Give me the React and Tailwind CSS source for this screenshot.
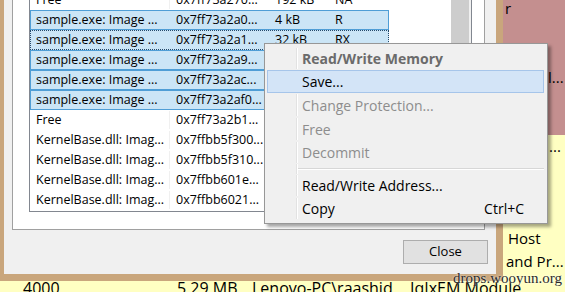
import React from "react";

const rows = [
  { c1: "Free", c2: "0x7ff73a270...", c3: "192 kB", c4: "NA" },
  { c1: "sample.exe: Image ...", c2: "0x7ff73a2a0...", c3: "4 kB", c4: "R", sel: true },
  { c1: "sample.exe: Image ...", c2: "0x7ff73a2a1...", c3: "32 kB", c4: "RX", sel: true, focus: true },
  { c1: "sample.exe: Image ...", c2: "0x7ff73a2a9...", c3: "12 kB", c4: "R", sel: true },
  { c1: "sample.exe: Image ...", c2: "0x7ff73a2ac...", c3: "4 kB", c4: "RW", sel: true },
  { c1: "sample.exe: Image ...", c2: "0x7ff73a2af0...", c3: "8 kB", c4: "R", sel: true },
  { c1: "Free", c2: "0x7ff73a2b1...", c3: "1.02 GB", c4: "NA" },
  { c1: "KernelBase.dll: Imag...", c2: "0x7ffbb5f300...", c3: "4 kB", c4: "R" },
  { c1: "KernelBase.dll: Imag...", c2: "0x7ffbb5f310...", c3: "1.1 MB", c4: "RX" },
  { c1: "KernelBase.dll: Imag...", c2: "0x7ffbb601e...", c3: "8 kB", c4: "RW" },
  { c1: "KernelBase.dll: Imag...", c2: "0x7ffbb6021...", c3: "36 kB", c4: "R" },
];

function Row({ r }) {
  const base = "flex h-[20px] w-[359px] items-center border whitespace-nowrap";
  let cls;
  if (r.focus) cls = "border-dotted border-[#24496b] bg-[#cbe5f6]";
  else if (r.sel) cls = "border-[#4f9ed6] bg-[#cbe5f6]";
  else cls = "border-transparent";
  return (
    <div className={`${base} ${cls}`}>
      <div className={`w-[139px] h-full flex items-center pl-[5px] overflow-hidden ${r.sel ? "" : "border-r border-[#f0f0f0]"}`}>{r.c1}</div>
      <div className="w-[99px] h-full flex items-center pl-[6px] overflow-hidden">{r.c2}</div>
      <div className="w-[60px] h-full flex items-center pl-[6px] overflow-hidden">{r.c3}</div>
      <div className="w-[59px] h-full flex items-center pl-[6px] overflow-hidden">{r.c4}</div>
    </div>
  );
}

function MenuItem({ label, shortcut, bold, disabled, hot, h }) {
  return (
    <div
      className={`flex items-center border ${h} ${hot ? "border-[#a6c5ea] bg-[#d3e4f7]" : "border-transparent"}`}
    >
      <div className={`w-[29px] h-full shrink-0 border-r ${hot ? "border-transparent" : "border-[#e2e2e2]"}`} />
      <div className={`w-[1px] h-full shrink-0 ${hot ? "" : "bg-white"}`} />
      <div
        className={`flex-1 pl-[4px] ${bold ? "font-bold text-[#6b6b6b]" : disabled ? "text-[#8d8d8d]" : "text-black"}`}
      >
        {label}
      </div>
      {shortcut && <div className="pr-[19px] text-black">{shortcut}</div>}
    </div>
  );
}

export default function App() {
  const bgRows = [
    { bg: "bg-[#c48f8f]", text: "r", ml: "ml-[2px]" },
    { bg: "bg-[#c48f8f]", text: "", ml: "" },
    { bg: "bg-[#c48f8f]", text: "", ml: "" },
    { bg: "bg-[#c48f8f]", text: "l...", ml: "ml-[45px]" },
    { bg: "bg-[#c48f8f]", text: "", ml: "" },
    { bg: "bg-[#c48f8f]", text: "", ml: "" },
    { bg: "bg-[#ffffc2]", text: "...", ml: "ml-[46px]" },
    { bg: "bg-[#ffffc2]", text: "", ml: "" },
    { bg: "bg-[#ffffc2]", text: "", ml: "" },
    { bg: "bg-[#ffffc2]", text: "", ml: "" },
    { bg: "bg-[#ffffc2]", text: "Host", ml: "ml-[5px]" },
    { bg: "bg-[#ffffc2]", text: "and Pr...", ml: "ml-[3px]" },
  ];
  return (
    <div className="relative w-[565px] h-[292px] overflow-hidden bg-[#ffffc2] font-['Open_Sans',sans-serif] text-black">
      {/* background process list */}
      <div className="flex flex-col mt-[-3px] text-[15px]">
        {bgRows.map((r, i) => (
          <div key={i} className={`flex h-[23px] items-center ${r.bg}`}>
            <div className="w-[503px] shrink-0" />
            <div className={`whitespace-nowrap ${r.ml}`}>{r.text}</div>
          </div>
        ))}
        <div className="flex h-[30px] items-center whitespace-nowrap text-[16px]">
          <div className="w-[23px] shrink-0" />
          <div className="w-[154px] shrink-0">4000</div>
          <div className="w-[75px] shrink-0">5.29 MB</div>
          <div className="w-[158px] shrink-0">Lenovo-PC\raashid</div>
          <div>IqIxEM Module</div>
        </div>
      </div>

      {/* dialog window */}
      <div className="absolute left-0 top-0 w-[503px] h-[281px] border-l-[4px] border-r-[7px] border-b-[7px] border-[#c9a67c] bg-[#f0f0f0] flex flex-col text-[12.5px]">
        <div className="ml-[8px] w-[473px] h-[230px] bg-white border-l border-r border-b border-[#a0a0a0] pl-[16px] pt-0">
          <div className="relative w-[443px] h-[212px] border-l border-r border-b border-[#828790] overflow-hidden flex">
            <div className="flex flex-col mt-[-10px] w-[420px]">
              {rows.map((r, i) => (
                <Row key={i} r={r} />
              ))}
            </div>
            <div className="ml-auto w-[20px] h-full bg-[#f0f0f0] flex">
              <div className="w-[18px] h-[120px] bg-[#cdcdcd]" />
            </div>
          </div>
        </div>
        <div className="flex justify-end mt-[10px] mr-[8px]">
          <div className="w-[85px] h-[24px] border border-[#adadad] bg-[#e1e1e1] flex items-center justify-center text-[13px]">
            Close
          </div>
        </div>
      </div>

      {/* context menu */}
      <div className="absolute left-[264px] top-[43px] w-[284px] h-[181px] bg-[#f0f0f0] border border-[#979797] shadow-[3px_3px_3px_rgba(0,0,0,0.35)] pt-[3px] pl-[2px] pr-[3px] text-[14px] whitespace-nowrap">
        <MenuItem label="Read/Write Memory" bold h="h-[23px]" />
        <MenuItem label="Save..." hot h="h-[23px]" />
        <MenuItem label="Change Protection..." disabled h="h-[24px]" />
        <MenuItem label="Free" disabled h="h-[24px]" />
        <MenuItem label="Decommit" disabled h="h-[23px]" />
        <div className="flex h-[10px] items-stretch">
          <div className="w-[30px] shrink-0 border-r border-[#e2e2e2]" />
          <div className="w-[1px] shrink-0 bg-white" />
          <div className="flex-1 flex flex-col justify-center">
            <div className="h-[1px] bg-[#d7d7d7]" />
            <div className="h-[1px] bg-white" />
          </div>
        </div>
        <MenuItem label="Read/Write Address..." h="h-[23px]" />
        <MenuItem label="Copy" shortcut="Ctrl+C" h="h-[23px]" />
      </div>

      {/* watermark */}
      <div className="absolute right-[3px] bottom-[3px] font-['Liberation_Serif',serif] text-[15px] text-[#2a2a2a] [text-shadow:0_0_2px_#ffffff]">
        drops.wooyun.org
      </div>
    </div>
  );
}
